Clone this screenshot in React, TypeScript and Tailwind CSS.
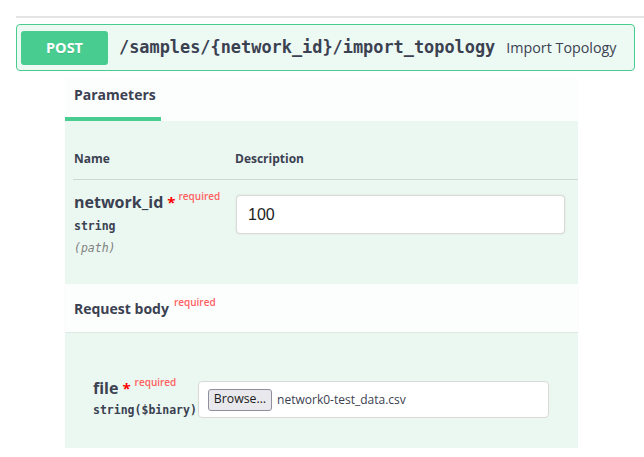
export default function App() {
  const sans = { fontFamily: '"Open Sans", "Noto Sans", sans-serif' };
  return (
    <div className="w-[644px] h-[457px] bg-white overflow-hidden text-[#3b4151]" style={sans}>
      <div className="pt-[16px] pl-[16px]">
        <div className="h-[2px] bg-[#e3e4e6]" />
      </div>

      {/* operation summary */}
      <div className="ml-[16px] mt-[6px] w-[619px] h-[47px] border border-[#49cc90] rounded-[4px] bg-[#edfaf4] flex items-center px-[4px]">
        <div className="w-[87px] h-[34px] rounded-[3px] bg-[#49cc90] flex items-center justify-center text-white text-[14.5px] font-bold [text-shadow:0_1px_0_rgba(0,0,0,0.1)]">
          POST
        </div>
        <span className="ml-[11px] font-['DejaVu_Sans_Mono',monospace] font-bold text-[16.9px] text-[#3b4151]">
          /samples/{"{network_id}"}/import_topology
        </span>
        <span className="ml-[11px] text-[14.3px] text-[#3b4151]">Import Topology</span>
      </div>

      {/* body */}
      <div className="ml-[65px] mt-[7px] w-[513px]">
        <div className="h-[43px] bg-[#fcfefd] flex items-end">
          <div className="w-[96px] h-[43px] border-b-[4px] border-[#49cc90] flex items-center pl-[9px] pb-[6px]">
            <span className="text-[14px] font-bold">Parameters</span>
          </div>
        </div>

        <div className="bg-[#ebf8f2] h-[163px] pt-[29px]">
          <div className="flex text-[12px] font-bold h-[30px] items-start border-b border-[#cdd6d3] ml-[8px]">
            <div className="w-[162px] pl-[1px]">Name</div>
            <div>Description</div>
          </div>
          <div className="flex pt-[12px] pl-[9px]">
            <div className="w-[162px]">
              <div className="flex items-start">
                <span className="text-[16px] font-bold leading-[20px]">network_id</span>
                <span className="text-[#ff0000] text-[15px] font-bold ml-[4px] leading-[20px]">*</span>
                <span className="text-[#ff6060] text-[10px] font-semibold ml-[3px] leading-[12px] -mt-[2px]">required</span>
              </div>
              <div className="font-['DejaVu_Sans_Mono',monospace] font-bold text-[11.5px] mt-[4px] leading-[20px] text-[#3b4151]">string</div>
              <div className="font-['DejaVu_Sans_Mono',monospace] italic text-[11.5px] mt-[2px] leading-[20px] text-[#808080]">(path)</div>
            </div>
            <div className="mt-[3px] w-[329px] h-[39px] bg-white border border-[#d9d9d9] rounded-[4px] shadow-[0_0_2px_rgba(0,0,0,0.1)] flex items-center pl-[11px]">
              <span className="text-[16px] font-['Liberation_Sans',sans-serif] text-[#222]">100</span>
            </div>
          </div>
        </div>

        <div className="h-[49px] bg-[#fcfefd] border-b border-[#dfe8e4] flex items-center pl-[9px] shadow-[0_1px_2px_rgba(0,0,0,0.05)]">
          <span className="text-[14px] font-bold">Request body</span>
          <span className="text-[#ff6060] text-[10px] font-semibold ml-[5px] -mt-[12px]">required</span>
        </div>

        <div className="bg-[#ebf8f2] h-[115px] pt-[44px] pl-[28px] flex items-start">
          <div>
            <div className="flex items-start">
              <span className="text-[16px] font-bold leading-[22px]">file</span>
              <span className="text-[#ff0000] text-[15px] font-bold ml-[4px] leading-[22px]">*</span>
              <span className="text-[#ff6060] text-[10px] font-semibold ml-[4px] leading-[12px] -mt-[1px]">required</span>
            </div>
            <div className="font-['DejaVu_Sans_Mono',monospace] font-bold text-[11.5px] leading-[20px] mt-[1px] whitespace-nowrap">string($binary)</div>
          </div>
          <div className="ml-[1px] mt-[4px] w-[351px] h-[37px] bg-white border border-[#d9d9d9] rounded-[4px] flex items-center pl-[9px]">
            <div className="h-[22px] px-[5px] rounded-[3px] border border-[#8f8f9d] bg-[#e9e9ed] flex items-center text-[12.3px] text-[#1b1b1b]">
              Browse…
            </div>
            <span className="ml-[5px] text-[12px] text-[#3b4151]">network0-test_data.csv</span>
          </div>
        </div>
      </div>
    </div>
  );
}
